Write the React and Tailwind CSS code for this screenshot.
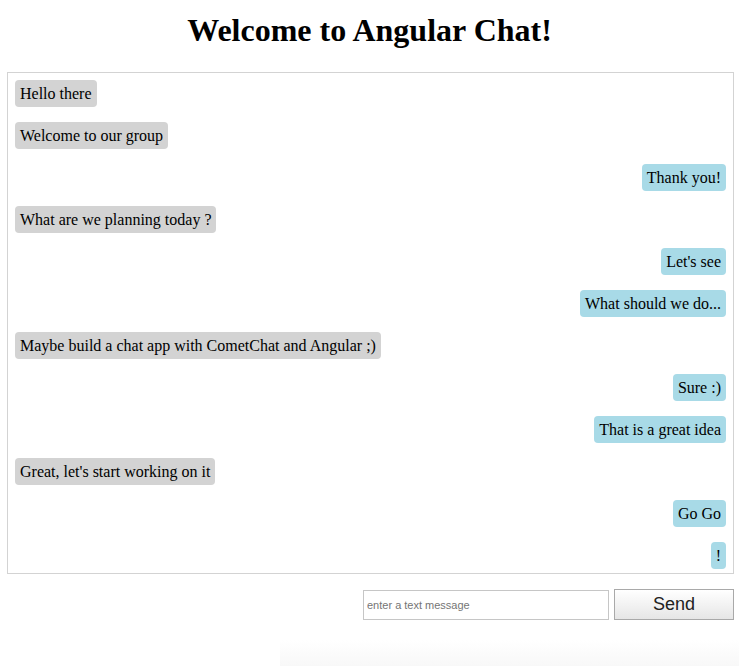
const messages = [
  { text: "Hello there", mine: false },
  { text: "Welcome to our group", mine: false },
  { text: "Thank you!", mine: true },
  { text: "What are we planning today ?", mine: false },
  { text: "Let's see", mine: true },
  { text: "What should we do...", mine: true },
  { text: "Maybe build a chat app with CometChat and Angular ;)", mine: false },
  { text: "Sure :)", mine: true },
  { text: "That is a great idea", mine: true },
  { text: "Great, let's start working on it", mine: false },
  { text: "Go Go", mine: true },
  { text: "!", mine: true },
];

function Bubble({ text, mine }) {
  return (
    <div className={mine ? "flex justify-end" : "flex justify-start"}>
      <span
        className={
          mine
            ? "bg-[#a8dae7] rounded-[4px] px-[5px] py-[4px] text-[16px] leading-[19px]"
            : "bg-[#d3d3d3] rounded-[4px] px-[5px] py-[4px] text-[16px] leading-[19px]"
        }
      >
        {text}
      </span>
    </div>
  );
}

export default function App() {
  return (
    <div className="w-[739px] h-[666px] bg-white text-black font-['Liberation_Serif',serif] overflow-hidden">
      <h1 className="text-center text-[32px] font-bold leading-[37px] pt-[12px] pb-[23px]">
        Welcome to Angular Chat!
      </h1>

      <div className="ml-[7px] mr-[5px] h-[502px] border border-[#d3d3d3] overflow-hidden pl-[7px] pr-[7px] pt-[7px] flex flex-col gap-[15px]">
        {messages.map((m, i) => (
          <Bubble key={i} text={m.text} mine={m.mine} />
        ))}
      </div>

      <div className="flex justify-end items-start mr-[5px] mt-[15px] gap-[5px]">
        <input
          type="text"
          placeholder="enter a text message"
          className="mt-[1px] w-[246px] h-[30px] border border-[#c6c6c6] px-[3px] text-[11px] font-['Liberation_Sans',Arial,sans-serif] placeholder:text-[#757575] outline-none"
        />
        <button className="w-[120px] h-[31px] border border-[#a9a9a9] bg-gradient-to-b from-white to-[#e6e6e6] text-[18px] text-[#222] font-['Liberation_Sans',Arial,sans-serif] leading-[29px] pb-[2px]">
          Send
        </button>
      </div>

      <div className="ml-[280px] mt-[20px] h-[26px] bg-gradient-to-b from-white to-[#f8f8f8]" />
    </div>
  );
}
